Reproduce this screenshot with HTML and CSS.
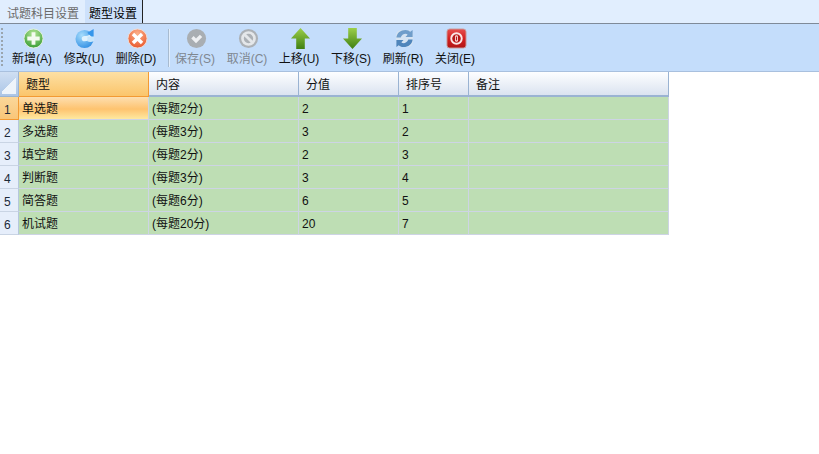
FILE: index.html
```html
<!DOCTYPE html>
<html lang="zh-CN">
<head>
<meta charset="utf-8">
<title>题型设置</title>
<link rel="stylesheet" href="styles.css">
</head>
<body>
<div class="tabs">
  <div class="tab">试题科目设置</div>
  <div class="tab active">题型设置</div>
</div>
<div class="toolbar">
  <div class="grip"></div>
  <div class="btn">
    <svg class="ico" viewBox="0 0 22 22"><defs><radialGradient id="g1" cx=".5" cy=".25" r=".85"><stop offset="0" stop-color="#b4e596"/><stop offset="1" stop-color="#2a952a"/></radialGradient></defs><circle cx="11" cy="11" r="10" fill="url(#g1)" stroke="#e4efe0"/><path d="M9 4.500h4V9h4.500v4H13v4.500H9V13H4.500V9H9z" fill="#f4fbf0"/></svg>
    <span>新增(A)</span>
  </div>
  <div class="btn">
    <svg class="ico" viewBox="0 0 22 22"><defs><radialGradient id="g2" cx=".35" cy=".3" r=".9"><stop offset="0" stop-color="#a5dcfc"/><stop offset="1" stop-color="#1e82e0"/></radialGradient></defs><circle cx="10" cy="11.500" r="9.500" fill="url(#g2)"/><path d="M13 5l6.500-4v9.500l-3-1.500z" fill="#3596ea"/><path d="M10 8.500c2 0 3.500-.5 5-1.500l2.500 2.500c-1.500 3-4.500 4.500-7.500 4.500-1.800 0-3-1.200-3-2.800S8.200 8.500 10 8.500z" fill="#dff2fe"/><path d="M13 9h7v4.500c-2.500 1.500-5 1.500-7 .5z" fill="#c8e6fb"/></svg>
    <span>修改(U)</span>
  </div>
  <div class="btn">
    <svg class="ico" viewBox="0 0 22 22"><defs><radialGradient id="g3" cx=".5" cy=".25" r=".85"><stop offset="0" stop-color="#fcb08a"/><stop offset="1" stop-color="#e64e22"/></radialGradient></defs><circle cx="11" cy="11" r="10" fill="url(#g3)" stroke="#f0dcd4"/><path d="M7.500 5l3.500 3.500L14.500 5 17 7.500 13.500 11 17 14.500 14.500 17 11 13.500 7.500 17 5 14.500 8.500 11 5 7.500z" fill="#fff"/></svg>
    <span>删除(D)</span>
  </div>
  <div class="sep"></div>
  <div class="btn off">
    <svg class="ico" viewBox="0 0 22 22"><circle cx="11" cy="11" r="10" fill="#a9aeb2"/><path d="M5.500 11l2.500-2.500 2.500 2.500 4-4L17 9.500 10.500 16z" fill="#eef0f2"/></svg>
    <span>保存(S)</span>
  </div>
  <div class="btn off">
    <svg class="ico" viewBox="0 0 22 22"><circle cx="11" cy="11" r="10" fill="#acb1b6"/><circle cx="11" cy="11" r="6.300" fill="none" stroke="#e4e7ea" stroke-width="2.800"/><path d="M6.500 6.500l9 9" stroke="#e4e7ea" stroke-width="3"/></svg>
    <span>取消(C)</span>
  </div>
  <div class="btn">
    <svg class="ico" viewBox="0 0 22 22"><defs><linearGradient id="g4" x1="0" y1="0" x2="0" y2="1"><stop offset="0" stop-color="#9ccf4a"/><stop offset="1" stop-color="#3f7f10"/></linearGradient></defs><path d="M11 0l10 11h-5.500v11h-9V11H1z" fill="url(#g4)"/></svg>
    <span>上移(U)</span>
  </div>
  <div class="btn">
    <svg class="ico" viewBox="0 0 22 22"><defs><linearGradient id="g5" x1="0" y1="0" x2="0" y2="1"><stop offset="0" stop-color="#9ccf4a"/><stop offset="1" stop-color="#3f7f10"/></linearGradient></defs><path d="M6.500 0h9v11H21L11 22 1 11h5.500z" fill="url(#g5)"/></svg>
    <span>下移(S)</span>
  </div>
  <div class="btn">
    <svg class="ico" viewBox="0 0 22 22"><rect x="2" y="2" width="18" height="18" rx="6" fill="#d5e3f2"/><path d="M2.500 10C3 5 7 2 12 2c2.500 0 4 1 5 2l2.500-2v7.500H12l2.300-2.300C13 5.500 9 5.500 7 10z" fill="#6f9dca"/><path d="M19.500 12c-.5 5-4.500 8-9.500 8-2.500 0-4-1-5-2l-2.500 2v-7.500H10l-2.300 2.300C9 16.500 13 16.500 15 12z" fill="#4f85bb"/></svg>
    <span>刷新(R)</span>
  </div>
  <div class="btn">
    <svg class="ico" viewBox="0 0 22 22"><defs><linearGradient id="g6" x1="0" y1="0" x2="0" y2="1"><stop offset="0" stop-color="#e65050"/><stop offset=".5" stop-color="#d42020"/><stop offset="1" stop-color="#b01515"/></linearGradient></defs><rect x="1" y="1" width="20" height="20" rx="3" fill="url(#g6)" stroke="#c8a0a0"/><circle cx="11" cy="11" r="5.500" fill="#b81818" stroke="#fbe6e6" stroke-width="2"/><rect x="9.500" y="7.500" width="3" height="7" rx="1.500" fill="#fbe6e6"/><rect x="10.400" y="9" width="1.200" height="4" fill="#b81818"/></svg>
    <span>关闭(E)</span>
  </div>
</div>
<div class="grid">
  <div class="corner"><div class="tri"></div></div>
  <div class="hd sel">题型</div><div class="hd">内容</div><div class="hd">分值</div><div class="hd">排序号</div><div class="hd">备注</div>

  <div class="num cur">1</div>
  <div class="cell cur-cell">单选题</div><div class="cell">(每题2分)</div><div class="cell">2</div><div class="cell">1</div><div class="cell"></div>

  <div class="num">2</div>
  <div class="cell">多选题</div><div class="cell">(每题3分)</div><div class="cell">3</div><div class="cell">2</div><div class="cell"></div>

  <div class="num">3</div>
  <div class="cell">填空题</div><div class="cell">(每题2分)</div><div class="cell">2</div><div class="cell">3</div><div class="cell"></div>

  <div class="num">4</div>
  <div class="cell">判断题</div><div class="cell">(每题3分)</div><div class="cell">3</div><div class="cell">4</div><div class="cell"></div>

  <div class="num">5</div>
  <div class="cell">简答题</div><div class="cell">(每题6分)</div><div class="cell">6</div><div class="cell">5</div><div class="cell"></div>

  <div class="num">6</div>
  <div class="cell">机试题</div><div class="cell">(每题20分)</div><div class="cell">20</div><div class="cell">7</div><div class="cell"></div>
</div>
</body>
</html>
```

FILE: styles.css
```css
* { box-sizing: border-box; }
html, body { margin: 0; padding: 0; background: #fff; }
body { font: 12px/16px "Liberation Sans", "Noto Sans CJK SC", sans-serif; color: #111; }

.tabs { height: 24px; display: flex; background: #e1eefe; border-bottom: 1px solid #7f8a98; padding-left: 2px; }
.tab { padding: 6px 5px 0 5px; height: 23px; color: #6b6b6b; }
.tab.active { background: #cde1fb; color: #000; border-right: 1px solid #222; padding: 6px 5px 0 4px; margin-left: 1px; }

.toolbar { height: 48px; display: flex; align-items: flex-start; background: #c4ddfb; border-bottom: 1px solid #a9c0de; padding-left: 1px; }
.grip { width: 2px; height: 38px; margin: 4px 4px 0 0; background: repeating-linear-gradient(#9aa5ae 0 2px, transparent 2px 4px); }
.btn { width: 52px; display: flex; flex-direction: column; align-items: center; padding-top: 4px; }
.ico { width: 21px; height: 21px; display: block; margin-bottom: 2px; }
.btn span { white-space: nowrap; margin-right: 2px; }
.btn.off span { color: #7f8790; }
.sep { width: 2px; height: 38px; margin: 5px 0 0 5px; background: #a8bbd0; border-right: 1px solid #e2eefc; }

.grid { width: 669px; display: grid; grid-template-columns: 19px 130px 150px 100px 70px 200px; grid-template-rows: 25px repeat(6, 23px); }
.corner { background: linear-gradient(#cfdff3, #abc5e6); border-right: 1px solid #9ab3d2; border-bottom: 1px solid #9ab3d2; padding: 3px 2px 2px 2px; }
.tri { width: 100%; height: 100%; background: linear-gradient(135deg, transparent 50%, #eef4fb 50%); }
.hd { background: linear-gradient(#fdfeff, #dbe3f0); border-right: 1px solid #9ab3d2; border-bottom: 2px solid #9ab3d2; padding: 5px 0 0 7px; }
.hd.sel { background: linear-gradient(#fde0a4, #fbc56b); border-right: 1px solid #f39a33; border-bottom: 1px solid #f39a33; }
.num { background: #e6eefb; border-right: 1px solid #b5c7de; border-bottom: 1px solid #c9d4e4; padding: 5px 0 0 4px; color: #1c2a3a; }
.num.cur { background: linear-gradient(#fbd79a, #f9c678); border-right: 1px solid #f39a33; border-bottom: 1px solid #f39a33; }
.cell { background: #bedeb4; border-right: 1px solid #cdd4e4; border-bottom: 1px solid #cdd4e4; padding: 4px 0 0 3px; }
.cur-cell { background: linear-gradient(#fddfb1 0, #fec36f 55%, #fee9a0 100%); }
```
